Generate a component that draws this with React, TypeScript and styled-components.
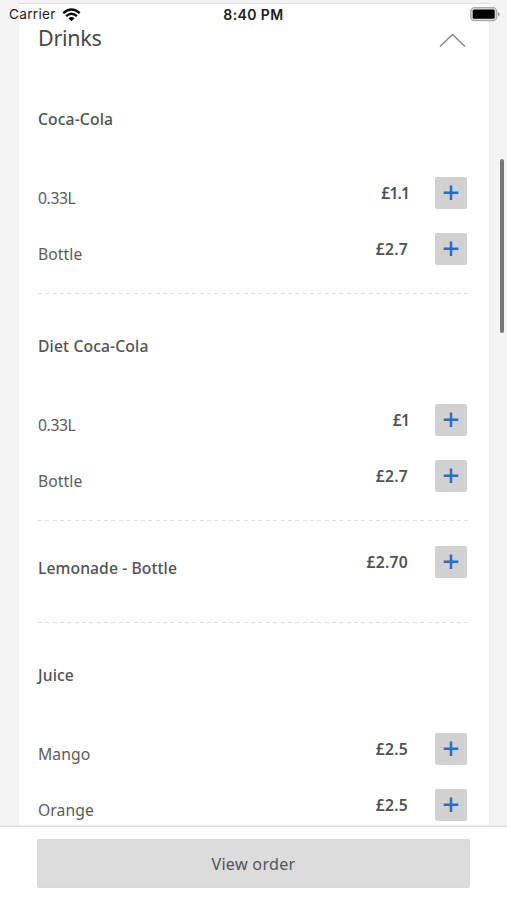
import React from 'react';
import styled, { createGlobalStyle } from 'styled-components';

const GlobalStyle = createGlobalStyle`
  * { box-sizing: border-box; }
  body { margin: 0; overflow: hidden; background: #f4f4f4; }
`;

const Screen = styled.div`
  position: relative;
  width: 507px;
  height: 900px;
  display: flex;
  flex-direction: column;
  overflow: hidden;
  background: #f4f4f4;
  font-family: 'Noto Sans', sans-serif;
  color: #525252;
`;

const StatusBar = styled.header`
  position: absolute;
  inset: 0 0 auto 0;
  height: 27px;
  display: grid;
  grid-template-columns: 1fr auto 1fr;
  align-items: center;
  padding: 0 7px 0 9px;
  font: 400 13.6px/27px Inter, sans-serif;
  color: #1c1c1c;
`;

const Carrier = styled.div`
  display: flex;
  align-items: center;
  gap: 6px;
  padding-top: 1px;
  letter-spacing: 0.3px;
`;

const Clock = styled.div`
  margin-right: 2px;
  padding-top: 1px;
  font-weight: 600;
  font-size: 14px;
  letter-spacing: 0.4px;
`;

const BatteryIcon = styled.svg`
  justify-self: end;
`;

const Scroller = styled.main`
  flex: 1;
  min-height: 0;
  overflow: hidden;
  padding: 3px 17px 0 18px;
`;

const Card = styled.section`
  height: 900px;
  padding: 0 19px;
  background: #fff;
  border: 1px solid #efefef;
  border-top-color: #dedede;
`;

const CategoryHeader = styled.div`
  height: 63px;
  display: flex;
  justify-content: space-between;
  padding: 19px 4px 0 0;
`;

const CategoryTitle = styled.h2`
  margin: 0;
  font: 400 21.5px/30px 'Noto Sans', sans-serif;
  letter-spacing: -0.3px;
  color: #484848;
`;

const Chevron = styled.svg`
  margin-top: 10px;
`;

const Group = styled.div<{ $single?: boolean }>`
  height: ${(p) => (p.$single ? 102 : 227)}px;
  padding-top: ${(p) => (p.$single ? 13 : 0)}px;
  background: repeating-linear-gradient(90deg, #e2e2e2 0 4px, transparent 4px 7.35px)
    left 0 top 100% / 100% 1.5px no-repeat;
`;

const GroupTitle = styled.h3`
  height: 98px;
  margin: 0;
  padding-top: 40px;
  font-size: 15.7px;
  line-height: 24px;
  font-weight: 500;
  letter-spacing: 0.12px;
`;

const Row = styled.div`
  height: 56px;
  display: grid;
  grid-template-columns: 1fr auto 32px;
  align-items: center;
  padding-right: 3px;
`;

const Name = styled.span<{ $strong?: boolean; $tight?: boolean }>`
  padding-top: ${(p) => (p.$strong ? 11 : 9)}px;
  font-size: 15.7px;
  line-height: 24px;
  font-weight: ${(p) => (p.$strong ? 500 : 400)};
  letter-spacing: ${(p) => (p.$tight ? '-0.4px' : '0.08px')};
  color: ${(p) => (p.$strong ? '#525252' : '#5c5c5c')};
`;

const Price = styled.span<{ $tight?: boolean }>`
  padding: 0 ${(p) => (p.$tight ? 26 : 27)}px 0 0;
  font-size: 15.7px;
  line-height: 24px;
  font-weight: 600;
  letter-spacing: ${(p) => (p.$tight ? '-0.9px' : '0.25px')};
`;

const AddButton = styled.button`
  width: 32px;
  height: 32px;
  padding: 0;
  border: 0;
  border-radius: 2px;
  background: #d1d1d1;
  display: grid;
  place-items: center;
`;

const Footer = styled.footer`
  position: relative;
  height: 74px;
  padding: 12px 37px 0;
  background: #fff;
  border-top: 1px solid #dfdfdf;
  box-shadow: 0 -1px 1px #ececec;
`;

const OrderButton = styled.button`
  display: block;
  width: 433px;
  height: 49px;
  padding: 0;
  border: 1px solid #d9d9d9;
  border-radius: 2px;
  background: #dcdcdc;
  font: 400 16.2px/46px 'Noto Sans', sans-serif;
  letter-spacing: 0.25px;
  color: #555;
`;

const ScrollThumb = styled.div`
  position: absolute;
  top: 159px;
  right: 3px;
  width: 4px;
  height: 174px;
  border-radius: 2px;
  background: #777;
`;

interface Option {
  name: string;
  price: string;
}

const groups: { title?: string; options: Option[] }[] = [
  { title: 'Coca-Cola', options: [{ name: '0.33L', price: '£1.1' }, { name: 'Bottle', price: '£2.7' }] },
  { title: 'Diet Coca-Cola', options: [{ name: '0.33L', price: '£1' }, { name: 'Bottle', price: '£2.7' }] },
  { options: [{ name: 'Lemonade - Bottle', price: '£2.70' }] },
  { title: 'Juice', options: [{ name: 'Mango', price: '£2.5' }, { name: 'Orange', price: '£2.5' }] },
];

const Wifi = () => (
  <svg width="19" height="14" viewBox="0 0 19 14" fill="none" stroke="#050505" strokeWidth="2.4">
    <path d="M1.3 5.1Q9.5-2.1 17.7 5.1" />
    <path d="M4.1 8.2Q9.5 3.4 14.9 8.2" />
    <path d="M9.5 13.3 6.5 10.3Q9.5 7.9 12.5 10.3Z" fill="#050505" stroke="none" />
  </svg>
);

const OptionRow = ({ option, strong }: { option: Option; strong?: boolean }) => (
  <Row>
    <Name $strong={strong} $tight={option.name.startsWith('0')}>{option.name}</Name>
    <Price $tight={option.price.startsWith('£1')}>{option.price}</Price>
    <AddButton aria-label={`Add ${option.name}`}>
      <svg width="16" height="16" viewBox="0 0 16 16" stroke="#256fc7" strokeWidth="2.5">
        <path d="M8 .4v14.6M.7 7.7h14.6" />
      </svg>
    </AddButton>
  </Row>
);

export default function App() {
  return (
    <Screen>
      <GlobalStyle />
      <Scroller>
        <Card>
          <CategoryHeader>
            <CategoryTitle>Drinks</CategoryTitle>
            <Chevron width="27" height="15" viewBox="0 0 27 15" fill="none" stroke="#8a8a8a" strokeWidth="1.5">
              <path d="M1 13.5 13.5 1.5 26 13.5" />
            </Chevron>
          </CategoryHeader>
          {groups.map((group, i) => (
            <Group key={i} $single={!group.title}>
              {group.title && <GroupTitle>{group.title}</GroupTitle>}
              {group.options.map((option) => (
                <OptionRow key={option.name} option={option} strong={!group.title} />
              ))}
            </Group>
          ))}
        </Card>
      </Scroller>
      <Footer>
        <OrderButton>View order</OrderButton>
      </Footer>
      <StatusBar>
        <Carrier>
          Carrier
          <Wifi />
        </Carrier>
        <Clock>8:40 PM</Clock>
        <BatteryIcon width="30" height="15" viewBox="0 0 30 15">
          <rect x="0.7" y="0.7" width="26" height="13" rx="3.8" fill="#d8d8d8" stroke="#aaa" strokeWidth="1.2" />
          <rect x="2.7" y="2.6" width="22" height="9.2" rx="1.6" fill="#000" />
          <path d="M28 5v4.6q1.6-.7 1.6-2.3T28 5Z" fill="#999" />
        </BatteryIcon>
      </StatusBar>
      <ScrollThumb />
    </Screen>
  );
}
